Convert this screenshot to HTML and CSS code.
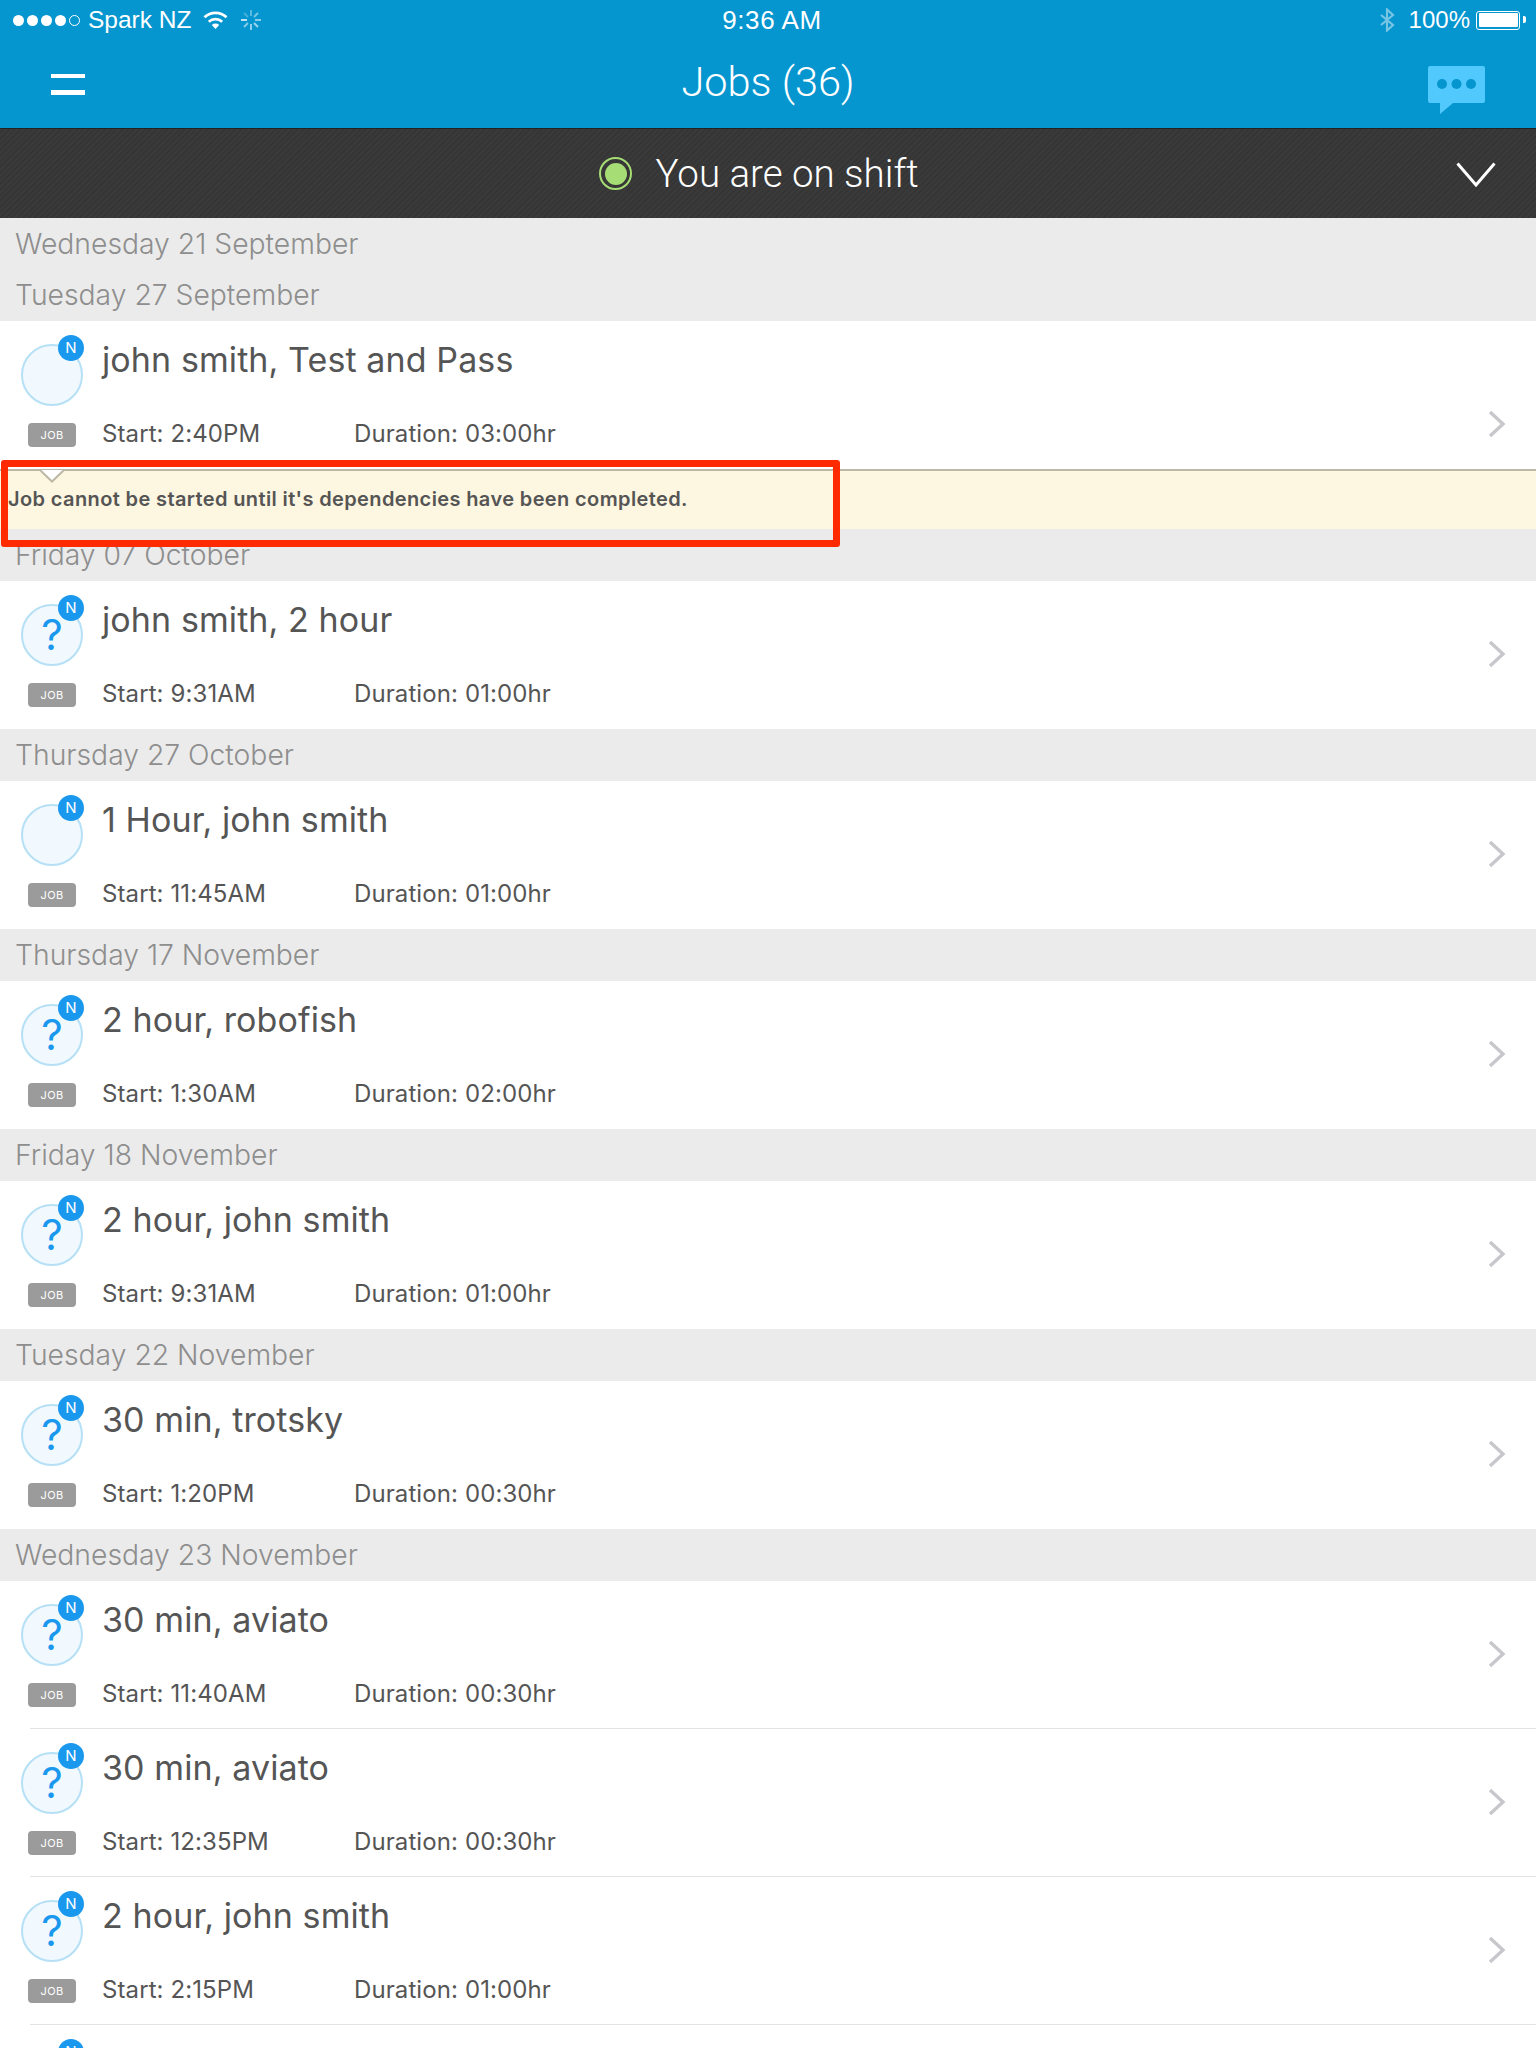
FILE: index.html
```html
<!DOCTYPE html>
<html lang="en">
<head>
<meta charset="utf-8">
<title>Jobs</title>
<link rel="stylesheet" href="styles.css">
</head>
<body>
<svg class="defs" width="0" height="0" aria-hidden="true">
  <symbol id="chev" viewBox="0 0 18 28"><path d="M2 2l13 12L2 26" fill="none" stroke="#c7c7cc" stroke-width="3.4"/></symbol>
</svg>
<header class="appbar">
  <div class="status">
    <div class="status-left">
      <span class="signal"><i></i><i></i><i></i><i></i><i class="off"></i></span>
      <span class="carrier">Spark NZ</span>
      <svg class="wifi" viewBox="0 0 25 18"><path d="M1.500 6.300a16 16 0 0 1 22 0M5.800 10.800a10 10 0 0 1 13.400 0" fill="none" stroke="#fff" stroke-width="2.800"/><path d="M8.800 14a5.500 5.500 0 0 1 7.400 0l-3.700 4z" fill="#fff"/></svg>
      <svg class="spinner" viewBox="0 0 20 20" stroke="#fff" stroke-width="2">
        <path d="M10 0v6" opacity=".45"/><path d="M17 3l-4 4" opacity=".6"/><path d="M20 10h-6" opacity=".7"/><path d="M17 17l-4-4" opacity=".8"/><path d="M10 20v-6" opacity=".75"/><path d="M3 17l4-4" opacity=".7"/><path d="M0 10h6" opacity="1"/><path d="M3 3l4 4" opacity=".35"/>
      </svg>
    </div>
    <div class="clock">9:36 AM</div>
    <div class="status-right">
      <svg class="bt" viewBox="0 0 16 24"><path d="M2 7l12 10-6 5.500V1.500L14 7 2 17" fill="none" stroke="#fff" stroke-width="2.200"/></svg>
      <span class="pct">100%</span>
      <span class="battery"><span class="battery-fill"></span></span>
    </div>
  </div>
  <div class="navbar">
    <span class="menu"><i></i><i></i></span>
    <h1 class="nav-title">Jobs (36)</h1>
    <svg class="chat" viewBox="0 0 57 48"><path d="M2 0h53a2 2 0 0 1 2 2v33a2 2 0 0 1-2 2H25L12 48V37H2a2 2 0 0 1-2-2V2a2 2 0 0 1 2-2z" fill="#52c9fd"/><circle cx="14" cy="18" r="5" fill="#0595cf"/><circle cx="28.500" cy="18" r="5" fill="#0595cf"/><circle cx="43" cy="18" r="5" fill="#0595cf"/></svg>
  </div>
</header>
<div class="shift">
  <span class="shift-dot"><span></span></span>
  <span class="shift-text">You are on shift</span>
  <svg class="shift-chev" viewBox="0 0 40 25"><path d="M1.500 1.500L20 23 38.500 1.500" fill="none" stroke="#fff" stroke-width="3"/></svg>
</div>
<main class="list">
  <div class="day first">Wednesday 21 September</div>
  <div class="day">Tuesday 27 September</div>
  <div class="job-wrap">
    <article class="job">
      <div class="lead"><span class="avatar"><span class="n">N</span></span><span class="tag">JOB</span></div>
      <div class="body"><div class="title">john smith, Test and Pass</div><div class="meta"><span class="start">Start: 2:40PM</span><span>Duration: 03:00hr</span></div></div>
    </article>
    <div class="alert">
      <svg class="notch" viewBox="0 0 26 14"><path d="M0 1h1L13 12.500 25 1h1" fill="#fff" stroke="#bcb8a5" stroke-width="2"/></svg>
      <span class="alert-text">Job cannot be started until it's dependencies have been completed.</span>
      <span class="callout"></span>
    </div>
    <svg class="chevron"><use href="#chev"/></svg>
  </div>
  <div class="day">Friday 07 October</div>
  <article class="job">
    <div class="lead"><span class="avatar">?<span class="n">N</span></span><span class="tag">JOB</span></div>
    <div class="body"><div class="title">john smith, 2 hour</div><div class="meta"><span class="start">Start: 9:31AM</span><span>Duration: 01:00hr</span></div></div>
    <svg class="chevron"><use href="#chev"/></svg>
  </article>
  <div class="day">Thursday 27 October</div>
  <article class="job">
    <div class="lead"><span class="avatar"><span class="n">N</span></span><span class="tag">JOB</span></div>
    <div class="body"><div class="title">1 Hour, john smith</div><div class="meta"><span class="start">Start: 11:45AM</span><span>Duration: 01:00hr</span></div></div>
    <svg class="chevron"><use href="#chev"/></svg>
  </article>
  <div class="day">Thursday 17 November</div>
  <article class="job">
    <div class="lead"><span class="avatar">?<span class="n">N</span></span><span class="tag">JOB</span></div>
    <div class="body"><div class="title">2 hour, robofish</div><div class="meta"><span class="start">Start: 1:30AM</span><span>Duration: 02:00hr</span></div></div>
    <svg class="chevron"><use href="#chev"/></svg>
  </article>
  <div class="day">Friday 18 November</div>
  <article class="job">
    <div class="lead"><span class="avatar">?<span class="n">N</span></span><span class="tag">JOB</span></div>
    <div class="body"><div class="title">2 hour, john smith</div><div class="meta"><span class="start">Start: 9:31AM</span><span>Duration: 01:00hr</span></div></div>
    <svg class="chevron"><use href="#chev"/></svg>
  </article>
  <div class="day">Tuesday 22 November</div>
  <article class="job">
    <div class="lead"><span class="avatar">?<span class="n">N</span></span><span class="tag">JOB</span></div>
    <div class="body"><div class="title">30 min, trotsky</div><div class="meta"><span class="start">Start: 1:20PM</span><span>Duration: 00:30hr</span></div></div>
    <svg class="chevron"><use href="#chev"/></svg>
  </article>
  <div class="day">Wednesday 23 November</div>
  <article class="job sep">
    <div class="lead"><span class="avatar">?<span class="n">N</span></span><span class="tag">JOB</span></div>
    <div class="body"><div class="title">30 min, aviato</div><div class="meta"><span class="start">Start: 11:40AM</span><span>Duration: 00:30hr</span></div></div>
    <svg class="chevron"><use href="#chev"/></svg>
  </article>
  <article class="job sep">
    <div class="lead"><span class="avatar">?<span class="n">N</span></span><span class="tag">JOB</span></div>
    <div class="body"><div class="title">30 min, aviato</div><div class="meta"><span class="start">Start: 12:35PM</span><span>Duration: 00:30hr</span></div></div>
    <svg class="chevron"><use href="#chev"/></svg>
  </article>
  <article class="job sep">
    <div class="lead"><span class="avatar">?<span class="n">N</span></span><span class="tag">JOB</span></div>
    <div class="body"><div class="title">2 hour, john smith</div><div class="meta"><span class="start">Start: 2:15PM</span><span>Duration: 01:00hr</span></div></div>
    <svg class="chevron"><use href="#chev"/></svg>
  </article>
  <article class="job">
    <div class="lead"><span class="avatar"><span class="n">N</span></span></div>
  </article>
</main>
</body>
</html>
```
FILE: styles.css
```css
* { box-sizing: border-box; }
html, body { margin: 0; height: 100%; }
body {
  height: 2048px;
  overflow: hidden;
  background: #fff;
  font-family: Inter, "Liberation Sans", sans-serif;
  color: #555;
}
.defs { position: absolute; }

.appbar { height: 129px; background: #0595cf; color: #fff; border-bottom: 1px solid #222; display: flex; flex-direction: column; }
.status { height: 40px; display: grid; grid-template-columns: 1fr auto 1fr; align-items: center; padding: 0 10px 0 13px; font-family: "Liberation Sans", sans-serif; font-size: 24.500px; }
.status-left, .status-right { display: flex; align-items: center; }
.status-right { justify-content: flex-end; }
.signal { display: flex; gap: 3px; }
.signal i { width: 11px; height: 11px; border-radius: 50%; background: #fff; }
.signal i.off { background: none; border: 1px solid #fff; }
.carrier { margin-left: 8px; }
.wifi { width: 25px; height: 18px; margin-left: 12px; }
.spinner { width: 20px; height: 20px; margin-left: 13px; opacity: .75; }
.clock { font-size: 26px; letter-spacing: .6px; padding-left: 5px; }
.bt { width: 16px; height: 24px; opacity: .45; margin-right: 14px; }
.pct { font-size: 24px; margin-right: 6px; }
.battery { width: 44px; height: 19px; border: 1.500px solid #fff; border-radius: 3px; padding: 1.500px; position: relative; margin-right: 6px; }
.battery::after { content: ""; position: absolute; right: -6.500px; top: 4.500px; width: 3px; height: 7px; background: #fff; border-radius: 0 2px 2px 0; }
.battery-fill { display: block; height: 100%; background: #fff; border-radius: 1px; }

.navbar { flex: 1; display: grid; grid-template-columns: 1fr auto 1fr; align-items: center; padding: 0 51px; }
.menu { display: flex; flex-direction: column; gap: 12px; width: 34px; }
.menu i { height: 4.500px; background: #fff; }
.nav-title { margin: 0 0 4px; font-family: Roboto, "Liberation Sans", sans-serif; font-weight: 300; font-size: 41.500px; line-height: 1.2; }
.chat { width: 57px; height: 48px; justify-self: end; margin: 12px 0 0 0; }

.shift {
  height: 89px;
  position: relative;
  display: flex;
  align-items: center;
  justify-content: center;
  padding-right: 18px;
  color: #fff;
  background: repeating-linear-gradient(135deg, #3a3a3a 0 2px, #353535 2px 4px);
}
.shift-dot { width: 33px; height: 33px; border-radius: 50%; border: 2px solid #a6dd75; padding: 3.500px; margin-right: 23px; }
.shift-dot span { display: block; width: 100%; height: 100%; border-radius: 50%; background: #a6dd75; }
.shift-text { font-family: Roboto, "Liberation Sans", sans-serif; font-weight: 300; font-size: 38.500px; }
.shift-chev { position: absolute; right: 40px; top: 33px; width: 40px; height: 25px; }

.day { height: 52px; background: #ebebeb; padding-left: 15px; color: #8e8e8e; font-size: 28.300px; font-weight: 300; line-height: 53px; overflow: hidden; }
.day.first { height: 51px; line-height: 52px; }

.job-wrap { position: relative; }
.job { position: relative; height: 148px; display: flex; background: #fff; padding-left: 21px; }
.job.sep::after { content: ""; position: absolute; left: 30px; right: 0; bottom: 0; height: 1px; background: #e3e3e3; }
.lead { width: 62px; flex: none; padding-top: 23px; display: flex; flex-direction: column; align-items: center; }
.avatar { position: relative; width: 62px; height: 62px; flex: none; border-radius: 50%; border: 2px solid #b5e0f5; background: #f1f9fe; color: #1a98ee; font-size: 42px; line-height: 58px; text-align: center; font-weight: 400; }
.n { position: absolute; top: -11px; right: -3px; width: 26px; height: 26px; border-radius: 50%; background: #1a98ee; color: #fff; font-size: 15px; line-height: 26px; text-align: center; }
.tag { width: 48px; height: 24px; margin-top: 17px; border-radius: 4px; background: #9b9b9b; color: #fff; font-size: 11px; line-height: 24px; text-align: center; letter-spacing: .3px; }
.body { margin-left: 19px; padding-top: 19px; }
.title { font-size: 34px; line-height: 40px; letter-spacing: .1px; }
.meta { margin-top: 42px; display: flex; font-size: 24px; line-height: 23px; letter-spacing: .1px; }
.start { width: 252px; }
.chevron { position: absolute; right: 30px; top: 50%; margin-top: -15.500px; width: 18px; height: 28px; }

.alert { position: relative; height: 60px; background: #fdf6e0; border-top: 2px solid #bcb8a5; padding-left: 8px; }
.alert-text { display: block; font-size: 20px; font-weight: 600; line-height: 57px; letter-spacing: .38px; color: #555; }
.notch { position: absolute; left: 39px; top: -2px; width: 26px; height: 14px; }
.callout { position: absolute; left: 1px; top: -11px; width: 839px; height: 87px; border: 7px solid #ff2a00; border-radius: 3px; }
```
